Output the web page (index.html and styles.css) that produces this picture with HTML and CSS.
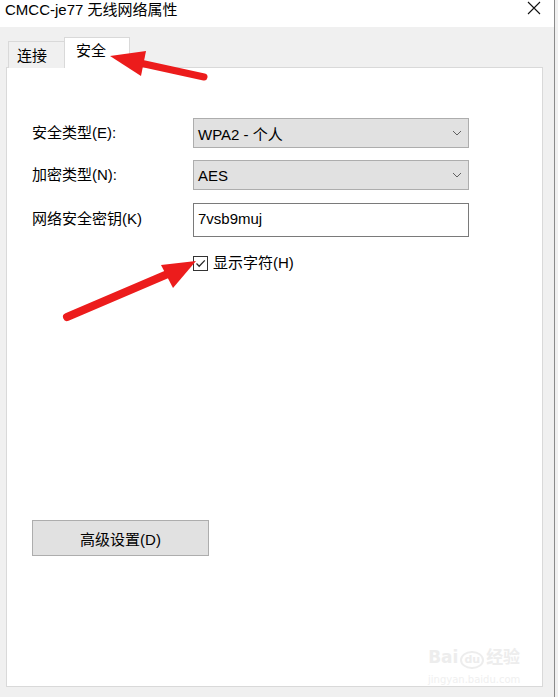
FILE: index.html
```html
<!DOCTYPE html>
<html lang="zh-CN">
<head>
<meta charset="utf-8">
<title>CMCC-je77 无线网络属性</title>
<link rel="stylesheet" href="styles.css">
</head>
<body>
<div class="screen">
  <div class="window">
    <div class="titlebar">
      <span class="title">CMCC-je77 无线网络属性</span>
      <svg class="close" width="14" height="14" viewBox="0 0 14 14"><path d="M1 1L13 13M13 1L1 13" stroke="#111" stroke-width="1.1" fill="none"/></svg>
    </div>
    <div class="client">
      <div class="tabs">
        <div class="tab">连接</div>
        <div class="tab active">安全</div>
      </div>
      <div class="panel">
        <div class="form">
          <div class="label">安全类型(E):</div>
          <div class="select"><span>WPA2 - 个人</span><svg class="chev" width="10" height="6" viewBox="0 0 10 6"><path d="M1 1L5 5L9 1" stroke="#606060" stroke-width="1" fill="none"/></svg></div>
          <div class="label">加密类型(N):</div>
          <div class="select"><span>AES</span><svg class="chev" width="10" height="6" viewBox="0 0 10 6"><path d="M1 1L5 5L9 1" stroke="#606060" stroke-width="1" fill="none"/></svg></div>
          <div class="label">网络安全密钥(K)</div>
          <div class="input">7vsb9muj</div>
        </div>
        <div class="check-row">
          <span class="checkbox"><svg width="13" height="13" viewBox="0 0 13 13"><path d="M2.5 6.5L5.2 9.2L10.8 3.4" stroke="#2a2a2a" stroke-width="1.3" fill="none"/></svg></span>
          <span class="check-label">显示字符(H)</span>
        </div>
        <div class="button">高级设置(D)</div>
        <div class="watermark">
          <div class="wm-logo">Bai<span class="wm-paw">du</span>经验</div>
          <div class="wm-url">jingyan.baidu.com</div>
        </div>
      </div>
    </div>
  </div>
  <div class="edge"></div>
  <svg class="arrows" width="558" height="697" viewBox="0 0 558 697">
    <line x1="204" y1="77" x2="140" y2="63" stroke="#ec1c1c" stroke-width="7" stroke-linecap="round"/>
    <polygon points="110,56 146,51 141,76" fill="#ec1c1c"/>
    <line x1="67" y1="317" x2="170" y2="273" stroke="#ec1c1c" stroke-width="8" stroke-linecap="round"/>
    <polygon points="196,261 161,265 173,288" fill="#ec1c1c"/>
  </svg>
</div>
</body>
</html>
```

FILE: styles.css
```css
html, body {
  margin: 0;
  padding: 0;
}
body {
  font-family: "Liberation Sans", "Noto Sans CJK SC", sans-serif;
  color: #000;
  background: #f0f0f0;
}
.screen {
  position: relative;
  width: 558px;
  height: 697px;
  display: flex;
  overflow: hidden;
}
.window {
  width: 554px;
  height: 697px;
  background: #f0f0f0;
  display: flex;
  flex-direction: column;
}
.edge {
  width: 1px;
  background: #8a8a8a;
  flex: none;
}
.titlebar {
  height: 27px;
  background: #fff;
  display: flex;
  align-items: flex-start;
  justify-content: space-between;
  padding: 0 0 0 5px;
  box-sizing: border-box;
}
.title {
  font-size: 15px;
  line-height: 20px;
}
.close {
  margin: 1px 13px 0 0;
}
.client {
  padding: 10px 0 0 6px;
  flex: 1;
  display: flex;
  flex-direction: column;
}
.tabs {
  display: flex;
  align-items: flex-end;
  padding-left: 2px;
  height: 31px;
  margin-bottom: -1px;
  position: relative;
  z-index: 1;
}
.tab {
  height: 27px;
  width: 57px;
  box-sizing: border-box;
  border: 1px solid #d9d9d9;
  border-bottom: none;
  background: #f0f0f0;
  font-size: 15px;
  line-height: 28px;
  padding-left: 8px;
}
.tab.active {
  height: 31px;
  width: 66px;
  margin-left: -1px;
  background: #fff;
  line-height: 26px;
  padding-left: 11px;
}
.panel {
  position: relative;
  width: 537px;
  height: 620px;
  box-sizing: border-box;
  background: #fff;
  border: 1px solid #d9d9d9;
  padding: 50px 0 0 25px;
}
.form {
  display: grid;
  grid-template-columns: 161px 276px;
  grid-template-rows: 30px 30px 34px;
  row-gap: 12px;
  align-items: center;
}
.label {
  font-size: 15px;
  line-height: 20px;
}
.select {
  height: 30px;
  box-sizing: border-box;
  background: #e1e1e1;
  border: 1px solid #adadad;
  display: flex;
  align-items: center;
  justify-content: space-between;
  padding: 0 6px 0 4px;
  font-size: 15px;
}
.input {
  height: 34px;
  margin-top: 1px;
  box-sizing: border-box;
  border: 1px solid #7a7a7a;
  background: #fff;
  font-size: 15px;
  line-height: 20px;
  padding: 5px 0 0 4px;
}
.check-row {
  margin: 19px 0 0 161px;
  display: flex;
  align-items: center;
  height: 16px;
}
.checkbox {
  width: 15px;
  height: 15px;
  box-sizing: border-box;
  border: 1px solid #333;
  display: flex;
  align-items: center;
  justify-content: center;
  background: #fff;
}
.check-label {
  font-size: 15px;
  line-height: 20px;
  margin-left: 5px;
}
.button {
  margin-top: 249px;
  width: 177px;
  height: 36px;
  box-sizing: border-box;
  background: #e1e1e1;
  border: 1px solid #adadad;
  font-size: 15px;
  display: flex;
  align-items: center;
  justify-content: center;
}
.watermark {
  position: absolute;
  left: 421px;
  top: 580px;
  color: #ededed;
  text-align: center;
  font-family: "DejaVu Sans", "Noto Sans CJK SC", sans-serif;
}
.wm-logo {
  font-size: 17px;
  line-height: 18px;
  font-weight: bold;
}
.wm-paw {
  display: inline-block;
  border: 2px solid #ededed;
  border-radius: 50%;
  font-size: 11px;
  line-height: 14px;
  padding: 0 2px;
  margin: 0 2px;
}
.wm-url {
  font-size: 10px;
  line-height: 14px;
  margin-top: 4px;
  color: #f0f0f0;
}
.arrows {
  position: absolute;
  left: 0;
  top: 0;
  z-index: 5;
  pointer-events: none;
}
```
